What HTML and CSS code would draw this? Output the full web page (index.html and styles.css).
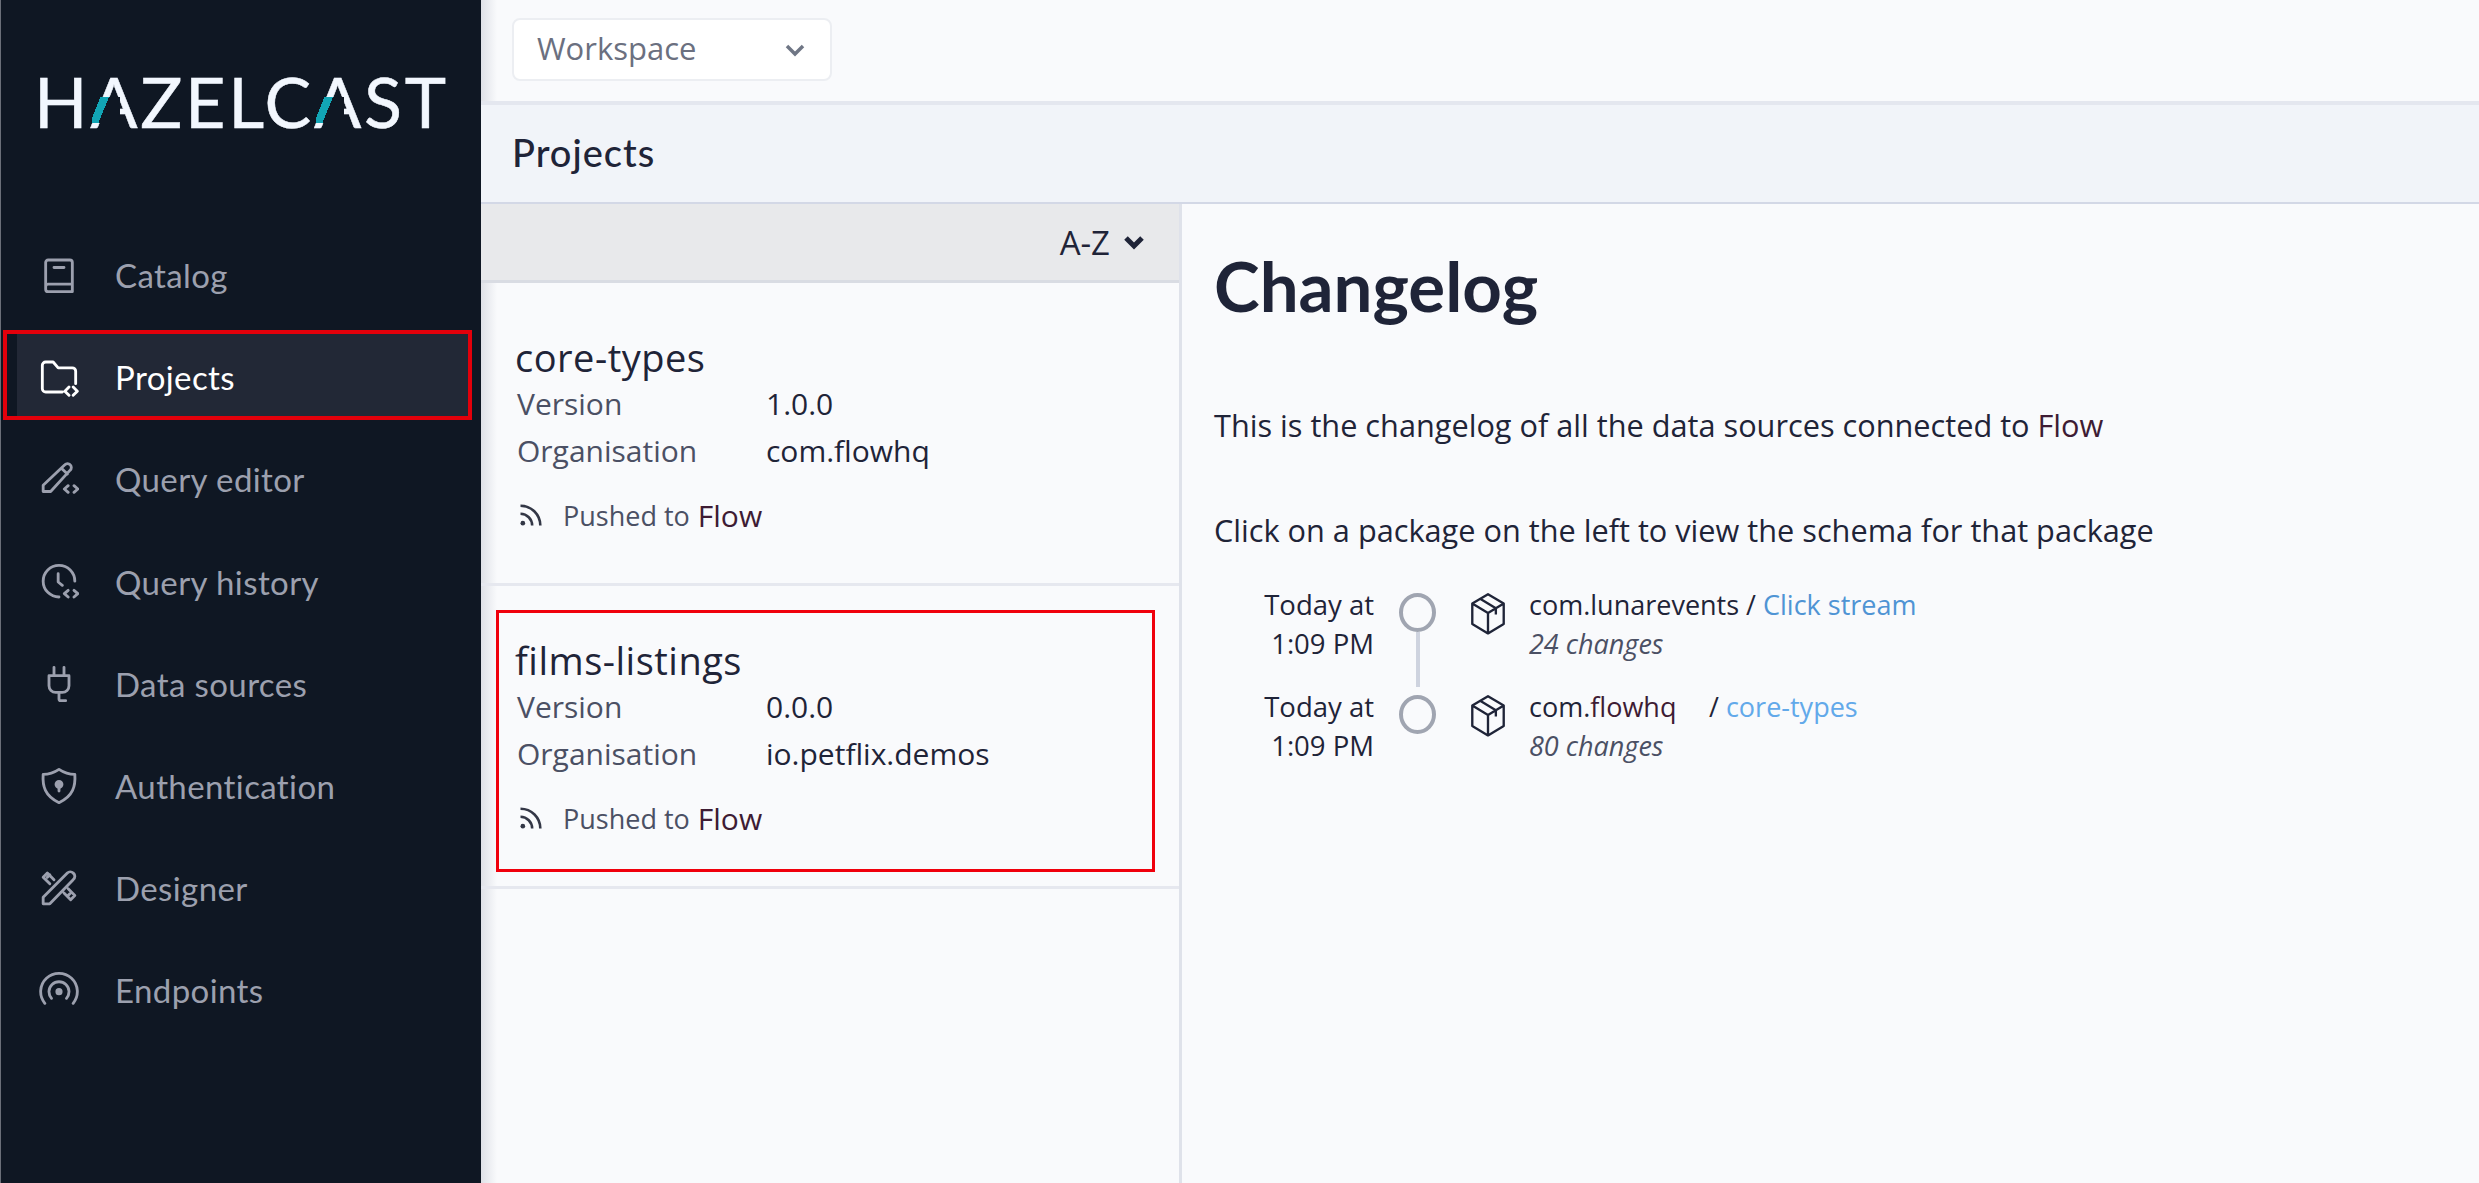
FILE: index.html
```html
<!DOCTYPE html>
<html lang="en">
<head>
  <meta charset="UTF-8" />
  <title>Projects</title>
  <link rel="stylesheet" href="styles.css">
</head>
<body>
  <div class="app">
    <aside class="sidebar">
      <div class="logo">H<span class="logo-a">A</span>ZELC<span class="logo-a">A</span>ST</div>
      <nav class="nav">
        <a class="nav-item">
          <svg class="nav-icon" viewBox="0 0 24 24"><path d="M4 19V4.500A1.500 1.500 0 0 1 5.500 3h13A1.500 1.500 0 0 1 20 4.500V22H5.500A1.500 1.500 0 0 1 4 20.500V19a1.500 1.500 0 0 1 1.500-1.500H20M9 7.500h6"/></svg>
          Catalog
        </a>
        <a class="nav-item active">
          <svg class="nav-icon" viewBox="0 0 24 24"><path d="M14 21H4a2 2 0 0 1-2-2V5a2 2 0 0 1 2-2h4.500l3 3.500H20a2 2 0 0 1 2 2V16M18 18l-2.500 2.500L18 23M20.500 18l2.500 2.500-2.500 2.500"/></svg>
          Projects
        </a>
        <a class="nav-item">
          <svg class="nav-icon" viewBox="0 0 24 24"><path d="M2.500 19.500v-3.800L15.500 3.500a2.200 2.200 0 0 1 3.200 0 2.200 2.200 0 0 1 0 3.200L7 19.500zM13.500 5.500l3.500 3.500M17.500 16l-2.300 2 2.300 2M21 16l2.300 2-2.300 2"/></svg>
          Query editor
        </a>
        <a class="nav-item">
          <svg class="nav-icon" viewBox="0 0 24 24"><path d="M12 21A9.500 9.500 0 1 1 21.500 11.500M11.500 7v5l2.500 2M17.500 17l-2.300 2 2.300 2M21 17l2.300 2-2.300 2"/></svg>
          Query history
        </a>
        <a class="nav-item">
          <svg class="nav-icon" viewBox="0 0 24 24"><path d="M9 2v5M15 2v5M6 7h12v6a4 4 0 0 1-4 4h-4a4 4 0 0 1-4-4zM12 17v4a1 1 0 0 0 1 1h3"/></svg>
          Data sources
        </a>
        <a class="nav-item">
          <svg class="nav-icon" viewBox="0 0 24 24"><path d="M12 2c3 2 6 3 9.500 3 .5 7-1 13-9.500 17C3.500 18 2 12 2.500 5 6 5 9 4 12 2z"/><circle class="icon-fill" cx="12" cy="11" r="1.800"/><path d="M12 12v3"/></svg>
          Authentication
        </a>
        <a class="nav-item">
          <svg class="nav-icon" viewBox="0 0 24 24"><path d="M2.500 21.500v-4L17 3a2.500 2.500 0 0 1 3.500 0 2.500 2.500 0 0 1 0 4L6.500 21.500zM9 7 5 3 2.500 5.500l4 4M15 15l4 4 2.500-2.500-4-4M5 5.500l1.500-1.500M17 17l1.500-1.500"/></svg>
          Designer
        </a>
        <a class="nav-item">
          <svg class="nav-icon" viewBox="0 0 24 24"><path d="M3.500 20a11 11 0 1 1 17 0M7.500 17a6 6 0 1 1 9 0"/><circle class="icon-fill" cx="12" cy="13" r="1.300"/></svg>
          Endpoints
        </a>
      </nav>
    </aside>

    <main class="content">
      <header class="topbar">
        <div class="select">
          <span>Workspace</span>
          <svg class="chevron" viewBox="0 0 24 24"><path d="M4 8l8 8 8-8"/></svg>
        </div>
      </header>
      <div class="title-bar">Projects</div>
      <div class="split">
        <section class="project-list">
          <div class="sort-bar">
            A-Z
            <svg class="sort-chevron" viewBox="0 0 24 24"><path d="M4 8l8 8 8-8"/></svg>
          </div>

          <div class="project">
            <div class="project-body">
              <h3>core-types</h3>
              <dl>
                <dt>Version</dt><dd>1.0.0</dd>
                <dt>Organisation</dt><dd>com.flowhq</dd>
              </dl>
              <div class="pushed">
                <svg class="rss" viewBox="0 0 24 24"><path d="M3 11a10 10 0 0 1 10 10M3 4a17 17 0 0 1 17 17"/><circle class="rss-dot" cx="5" cy="19" r="2"/></svg>
                <span>Pushed to</span><span class="flow">Flow</span>
              </div>
            </div>
          </div>

          <div class="project">
            <div class="project-body marked">
              <h3>films-listings</h3>
              <dl>
                <dt>Version</dt><dd>0.0.0</dd>
                <dt>Organisation</dt><dd>io.petflix.demos</dd>
              </dl>
              <div class="pushed">
                <svg class="rss" viewBox="0 0 24 24"><path d="M3 11a10 10 0 0 1 10 10M3 4a17 17 0 0 1 17 17"/><circle class="rss-dot" cx="5" cy="19" r="2"/></svg>
                <span>Pushed to</span><span class="flow">Flow</span>
              </div>
            </div>
          </div>
        </section>

        <section class="changelog">
          <h1>Changelog</h1>
          <p class="intro">This is the changelog of all the data sources connected to <span class="flow">Flow</span></p>
          <p class="intro second">Click on a package on the left to view the schema for that package</p>

          <div class="timeline">
            <div class="entry">
              <div class="when">Today at<br>1:09 PM</div>
              <div class="marker"><span class="dot"></span><span class="bar"></span></div>
              <svg class="cube" viewBox="0 0 24 28"><path d="M12 2 22 8v13l-10 6-10-6V8zM2 8l10 6 10-6M12 14v13M7 5l10 6v4"/></svg>
              <div class="what">
                <div>com.lunarevents / <a class="link">Click stream</a></div>
                <em>24 changes</em>
              </div>
            </div>
            <div class="entry">
              <div class="when">Today at<br>1:09 PM</div>
              <div class="marker"><span class="dot"></span></div>
              <svg class="cube" viewBox="0 0 24 28"><path d="M12 2 22 8v13l-10 6-10-6V8zM2 8l10 6 10-6M12 14v13M7 5l10 6v4"/></svg>
              <div class="what">
                <div><span class="pkg">com.<span class="flow">flowhq</span></span> / <a class="link light">core-types</a></div>
                <em>80 changes</em>
              </div>
            </div>
          </div>
        </section>
      </div>
    </main>
  </div>
</body>
</html>
```

FILE: styles.css
```css
* {
  box-sizing: border-box;
}

html, body {
  height: 100%;
}

body {
  margin: 0;
  overflow: hidden;
  background: #f9fafc;
  color: #1f2438;
  font-family: "Open Sans", "Noto Sans", sans-serif;
}

.app {
  display: flex;
  height: 1183px;
}

/* sidebar */
.sidebar {
  width: 481px;
  flex: none;
  background: #0f1723;
  border-left: 1px solid #6b6f78;
}

.logo {
  height: 208px;
  padding: 61px 0 0 33px;
  color: #f2f7fe;
  font-family: "Lato", sans-serif;
  font-size: 70px;
  font-weight: 400;
  line-height: 80px;
  letter-spacing: 2.700px;
  white-space: nowrap;
  -webkit-text-stroke: 0.500px #f2f7fe;
}

.logo-a {
  position: relative;
  display: inline-block;
}

/* hides the crossbar and colours the left leg */
.logo-a::after {
  content: "";
  position: absolute;
  left: 2px;
  top: 36px;
  width: 28px;
  height: 26px;
  background: linear-gradient(112deg, #0f1723 0 22%, #12a5b5 22% 44%, #0f1723 44%);
}

.nav {
  display: flex;
  flex-direction: column;
  margin-top: 16px;
}

.nav-item {
  display: flex;
  align-items: center;
  gap: 36px;
  height: 102.200px;
  padding-left: 38px;
  color: #9ca0ae;
  font-family: "Lato", sans-serif;
  font-size: 33px;
  letter-spacing: 0.400px;
}

.nav-item.active {
  height: 90px;
  margin: 4px 9px 8.200px 2px;
  padding-top: 4px;
  padding-left: 22px;
  background: #222836;
  color: #fff;
  outline: 4px solid #e3000b;
  outline-offset: -4px;
  border-left: 14px solid #0f1723;
}

.nav-icon {
  width: 40px;
  height: 40px;
  flex: none;
  fill: none;
  stroke: currentColor;
  stroke-width: 1.700;
  stroke-linecap: round;
  stroke-linejoin: round;
}

.icon-fill {
  fill: currentColor;
}

/* main */
.content {
  flex: 1;
  display: flex;
  flex-direction: column;
  min-width: 0;
  background: linear-gradient(90deg, #dfe1e7, #f9fafc 16px);
}

.topbar {
  height: 105px;
  flex: none;
  padding: 18px 0 0 31px;
  border-bottom: 4px solid #e4e7ef;
}

.select {
  display: flex;
  align-items: center;
  justify-content: space-between;
  width: 320px;
  height: 63px;
  padding: 0 23px;
  background: #fff;
  border: 2px solid #eceef2;
  border-radius: 8px;
  color: #6b7080;
  font-size: 31px;
  line-height: 56px;
}

.select span {
  margin-top: -3px;
}

.chevron {
  width: 24px;
  height: 24px;
  fill: none;
  stroke: #6f7685;
  stroke-width: 3.500;
}

.title-bar {
  height: 99px;
  flex: none;
  padding-left: 31px;
  background: #f1f4f9;
  border-bottom: 2px solid #d3d8e6;
  font-family: "Lato", sans-serif;
  font-size: 38px;
  font-weight: 500;
  line-height: 94px;
  letter-spacing: 1px;
}

.split {
  flex: 1;
  display: flex;
  min-height: 0;
}

.project-list {
  width: 701px;
  flex: none;
  border-right: 3px solid #dfe2ea;
}

.sort-bar {
  display: flex;
  align-items: center;
  justify-content: flex-end;
  gap: 12px;
  height: 79px;
  padding-right: 33px;
  background: #e8e9eb;
  border-bottom: 3px solid #d9dce3;
  font-size: 33px;
}

.sort-chevron {
  width: 24px;
  height: 24px;
  fill: none;
  stroke: #1f2438;
  stroke-width: 5;
}

.project {
  height: 303px;
  padding: 24px 24px 14px 15px;
  border-bottom: 3px solid #e6e8ef;
}

.project-body {
  height: 100%;
  padding: 23.500px 0 0 15px;
  border: 3px solid transparent;
}

.project-body.marked {
  border-color: #f0000c;
}

.project-body h3 {
  margin: 0 0 0 1px;
  font-size: 38px;
  font-weight: 400;
  line-height: 46px;
  letter-spacing: 0.500px;
}

.project-body dl {
  display: grid;
  grid-template-columns: 249px 1fr;
  margin: 0 0 0 3px;
  font-size: 30px;
  line-height: 47px;
}

.project-body dt {
  color: #4b5064;
}

.project-body dd {
  margin: 0;
}

.pushed {
  display: flex;
  align-items: center;
  margin: 18px 0 0 3px;
  color: #4b5064;
  font-size: 27px;
  line-height: 47px;
}

.rss {
  width: 28px;
  height: 28px;
  margin-right: 18px;
  fill: none;
  stroke: #333746;
  stroke-width: 2.200;
}

.rss-dot {
  fill: #333746;
  stroke: none;
}

.flow {
  color: #3e1c34;
}

.pushed .flow {
  margin-left: 8px;
  font-size: 30px;
}

/* changelog */
.changelog {
  flex: 1;
  padding: 36px 0 0 32px;
}

.changelog h1 {
  margin: 0;
  font-family: "Lato", sans-serif;
  font-size: 69px;
  font-weight: 700;
  line-height: 92px;
}

.intro {
  margin: 71px 0 0;
  font-size: 30.700px;
  line-height: 44px;
}

.intro.second {
  margin-top: 61px;
}

.timeline {
  margin: 33px 0 0 30px;
}

.entry {
  display: flex;
  height: 102px;
}

.when {
  width: 130px;
  flex: none;
  text-align: right;
  font-size: 27.500px;
  line-height: 39px;
}

.marker {
  display: flex;
  flex-direction: column;
  align-items: center;
  width: 37px;
  margin: 8px 33px 0 25px;
  flex: none;
}

.dot {
  width: 37px;
  height: 39px;
  flex: none;
  border: 4px solid #a0a5b1;
  border-radius: 50%;
}

.bar {
  flex: 1;
  width: 4px;
  background: #ced3df;
}

.cube {
  width: 38px;
  height: 44px;
  margin: 6px 22px 0 0;
  flex: none;
  fill: none;
  stroke: #1f2438;
  stroke-width: 1.500;
  stroke-linejoin: round;
}

.what {
  font-size: 27px;
  line-height: 39px;
}

.what em {
  color: #4b5064;
}

.pkg {
  display: inline-block;
  width: 173px;
}

.link {
  color: #4f94d4;
}

.link.light {
  color: #62a9ea;
}
```
